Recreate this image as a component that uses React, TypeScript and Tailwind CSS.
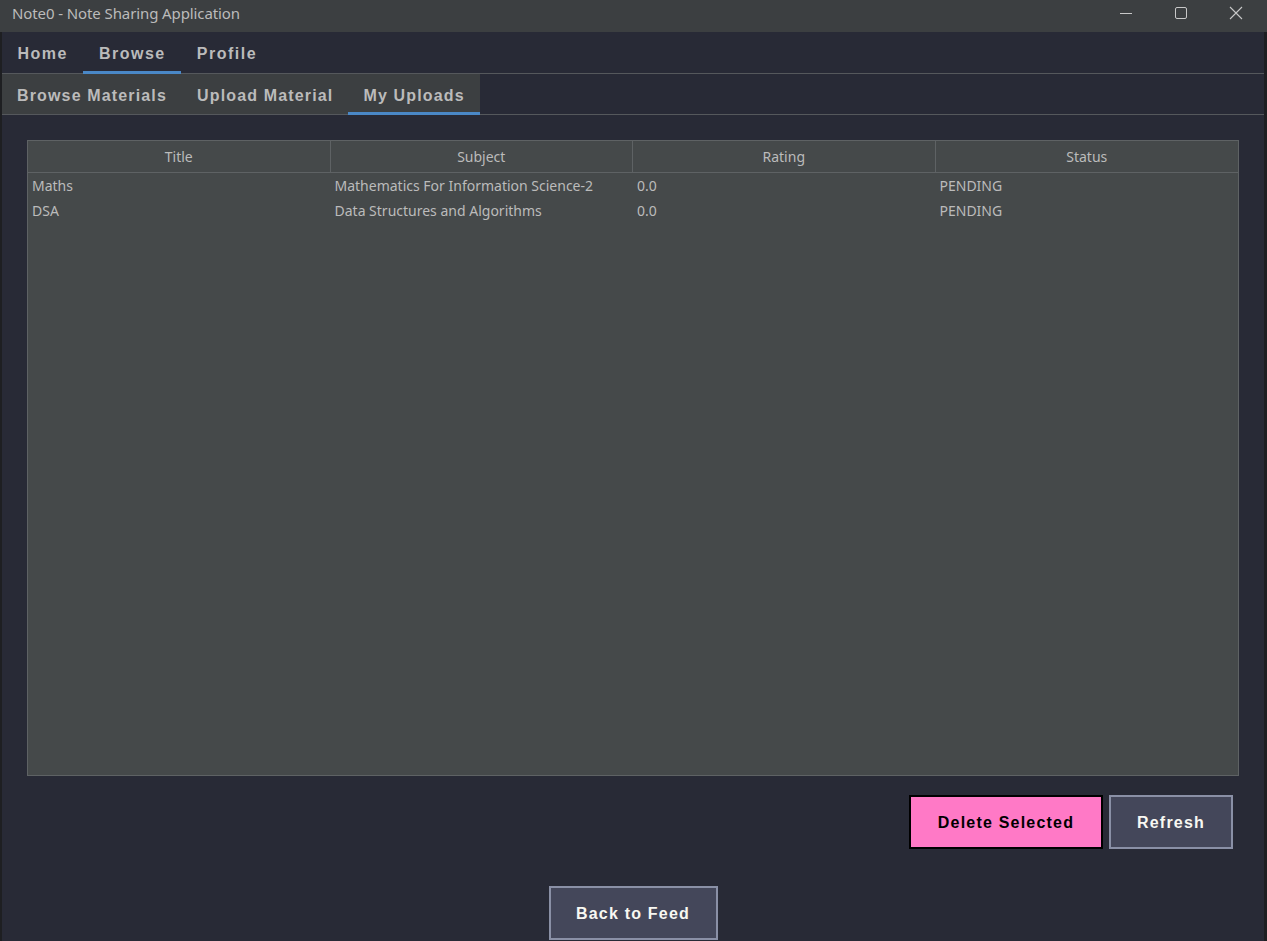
import React from "react";

const uiFont = { fontFamily: '"Noto Sans", "Open Sans", sans-serif' };
const boldFont = { fontFamily: '"Liberation Sans", Arial, sans-serif' };

function TitleBar() {
  return (
    <div className="flex h-[32px] items-start bg-[#3c3f41] text-[#bbbbbb]" style={uiFont}>
      <div className="pl-[12px] pt-[3px] text-[15px] leading-[20px] tracking-[-0.1px]">
        Note0 - Note Sharing Application
      </div>
      <div className="ml-auto flex h-full items-start pr-[4px]">
        <div className="flex w-[55px] justify-center pt-[6px]">
          <svg width="14" height="14" viewBox="0 0 14 14">
            <line x1="1" y1="7.5" x2="13" y2="7.5" stroke="#c8c8c8" strokeWidth="1" />
          </svg>
        </div>
        <div className="flex w-[55px] justify-center pt-[6px]">
          <svg width="14" height="14" viewBox="0 0 14 14">
            <rect x="1.5" y="1.5" width="11" height="11" rx="1.5" fill="none" stroke="#c8c8c8" strokeWidth="1" />
          </svg>
        </div>
        <div className="flex w-[55px] justify-center pt-[6px]">
          <svg width="14" height="14" viewBox="0 0 14 14">
            <path d="M1 1 L13 13 M13 1 L1 13" stroke="#c8c8c8" strokeWidth="1.1" />
          </svg>
        </div>
      </div>
    </div>
  );
}

function Tab({ label, active, main }: { label: string; active?: boolean; main?: boolean }) {
  return (
    <div
      className={`relative flex h-full items-center text-[16px] font-bold text-[#bbbbbb] ${
        main ? "px-[15.5px] pt-[2px] tracking-[1.5px]" : "px-[15px] pt-[3px] tracking-[1.15px]"
      }`}
      style={boldFont}
    >
      {label}
      {active && <div className="absolute bottom-[-1px] left-0 right-0 h-[3px] bg-[#4a88c7]" />}
    </div>
  );
}

const rows = [
  ["Maths", "Mathematics For Information Science-2", "0.0", "PENDING"],
  ["DSA", "Data Structures and Algorithms", "0.0", "PENDING"],
];

export default function App() {
  return (
    <div className="flex h-[941px] w-[1267px] flex-col overflow-hidden bg-[#1e1f22]">
      <TitleBar />
      <div className="flex min-h-0 flex-1 border-l-[2px] border-r-[3px] border-l-[#1e1f22] border-r-[#1e1f22] bg-[#282a36]">
        <div className="flex min-w-0 flex-1 flex-col">
          {/* main tabs */}
          <div className="flex h-[42px] items-stretch border-b border-[#55585c]">
            <Tab label="Home" main />
            <Tab label="Browse" main active />
            <Tab label="Profile" main />
          </div>
          {/* sub tabs */}
          <div className="flex h-[41px] items-stretch border-b border-[#55585c]">
            <div className="flex h-full bg-[#3c3f41]">
              <Tab label="Browse Materials" />
              <Tab label="Upload Material" />
              <Tab label="My Uploads" active />
            </div>
          </div>
          {/* content */}
          <div className="flex flex-1 flex-col px-[25px] pt-[25px]">
            <div className="flex h-[636px] flex-col border border-[#5e6264] bg-[#45494a]" style={uiFont}>
              <div className="grid h-[32px] grid-cols-4 border-b border-[#5e6264]">
                {["Title", "Subject", "Rating", "Status"].map((h, i) => (
                  <div
                    key={h}
                    className={`flex items-center justify-center text-[14px] text-[#bbbbbb] ${
                      i < 3 ? "border-r border-[#5e6264]" : ""
                    }`}
                  >
                    {h}
                  </div>
                ))}
              </div>
              {rows.map((r, ri) => (
                <div key={ri} className="grid h-[25px] grid-cols-4 items-center">
                  {r.map((c, ci) => (
                    <div key={ci} className="truncate pl-[4px] text-[14px] text-[#bbbbbb]">
                      {c}
                    </div>
                  ))}
                </div>
              ))}
            </div>
            <div className="mt-[19px] flex justify-end gap-[6px] pr-[6px]">
              <button
                className="flex h-[54px] w-[194px] items-center justify-center border-2 border-black bg-[#ff79c6] pt-[1px] text-[16px] font-bold tracking-[1.2px] text-black"
                style={boldFont}
              >
                Delete Selected
              </button>
              <button
                className="flex h-[54px] w-[124px] items-center justify-center border-2 border-[#8a90a6] bg-[#44475a] pt-[1px] text-[16px] font-bold tracking-[1.2px] text-[#f8f8f2]"
                style={boldFont}
              >
                Refresh
              </button>
            </div>
            <div className="mt-[37px] flex justify-center">
              <button
                className="flex h-[54px] w-[169px] items-center justify-center border-2 border-[#8a90a6] bg-[#44475a] pt-[1px] text-[16px] font-bold tracking-[1.2px] text-[#f8f8f2]"
                style={boldFont}
              >
                Back to Feed
              </button>
            </div>
          </div>
        </div>
      </div>
    </div>
  );
}
